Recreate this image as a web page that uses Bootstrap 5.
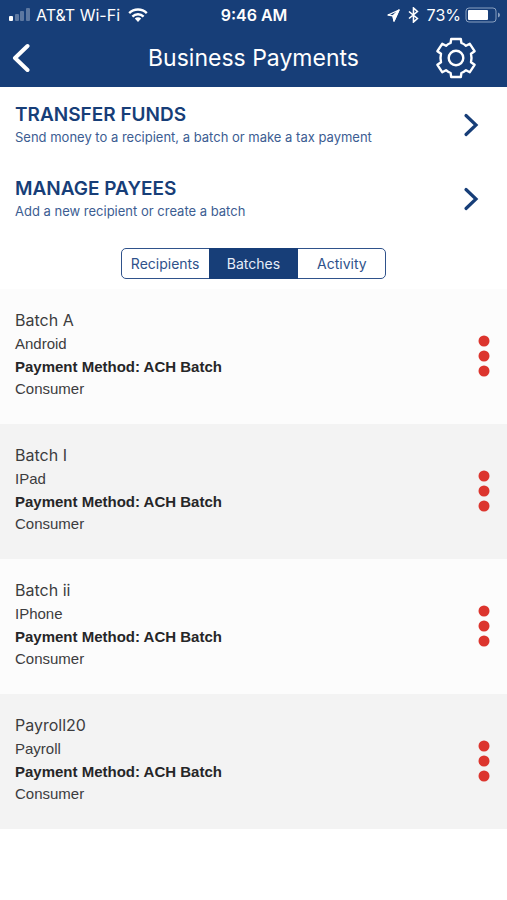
<!DOCTYPE html>
<html lang="en">
<head>
<meta charset="utf-8">
<meta name="viewport" content="width=device-width, initial-scale=1">
<title>Business Payments</title>
<link href="https://cdn.jsdelivr.net/npm/bootstrap@5.3.0/dist/css/bootstrap.min.css" rel="stylesheet">
<style>
:root { --navy: #173e78; }
body { font-family: Inter, "Liberation Sans", sans-serif; background: #fff; }
svg { display: block; flex: none; }
.app-header { background: var(--navy); color: #fff; }
.status-bar { height: 30px; padding: 0 7px 0 8px; font-size: 16px; line-height: 30px; }
.status-side { flex: 1 1 0; }
.status-time { font-weight: 600; }
.title-bar { height: 57px; padding: 0 12px 2px; }
.title-side { flex: 1 1 0; }
.settings { margin-right: 18px; }
.title-bar h1 { font-size: 23px; line-height: 30px; font-weight: 400; }
.action-link { height: 74px; padding: 2px 28px 0 15px; color: var(--navy); }
.action-name { font-size: 19px; line-height: 24px; font-weight: 600; }
.action-note { font-size: 13px; line-height: 20px; color: #3c5d92; }
.segments { width: 266px; height: 31px; margin: 13px auto 10px; }
.segments .btn { --bs-btn-color: #2f528b; --bs-btn-border-color: #2f528b; --bs-btn-active-bg: var(--navy);
  --bs-btn-active-border-color: var(--navy); --bs-btn-active-color: #e6edf8; --bs-btn-border-radius: 5px;
  flex: 1 1 0; padding: 0; font-size: 14px; line-height: 29px; }
.batch { padding: 20px 17px 24px 15px; color: #3c3c3e; background: #fcfcfc; }
.batch:nth-child(even) { background: #f3f3f3; }
.batch h2 { font-size: 16px; line-height: 23px; font-weight: 400; }
.batch p { font: 15px/23px "Liberation Sans", Arial, sans-serif; }
.batch p.method { font-weight: 700; color: #262628; }
.batch p:last-child { line-height: 22px; }
.batch .btn { padding: 3px 0 0; }
</style>
<script src="https://cdn.jsdelivr.net/npm/bootstrap@5.3.0/dist/js/bootstrap.bundle.min.js"></script>
</head>
<body>
<header class="app-header">
  <div class="status-bar d-flex align-items-center">
    <div class="status-side d-flex align-items-center">
      <svg width="24" height="16" viewBox="0 0 24 16" fill="#fff" aria-hidden="true"><rect x="1" y="9" width="4" height="5" rx="1"/><g opacity=".3"><rect x="7" y="7" width="4" height="7" rx="1"/><rect x="12" y="4" width="4" height="10" rx="1"/><rect x="18" y="1" width="4" height="13" rx="1"/></g></svg>
      <span class="ms-1">AT&amp;T Wi-Fi</span>
      <svg class="ms-2" width="20" height="16" viewBox="0 0 20 16" fill="none" stroke="#fff" stroke-width="2.4" aria-hidden="true"><path d="M1.2 6.2a12.4 12.4 0 0 1 17.6 0M4.4 9.6a7.900 7.900 0 0 1 11.2 0"/><path d="M6.8 11.6a4.500 4.500 0 0 1 6.4 0L10 15z" fill="#fff" stroke="none"/></svg>
    </div>
    <div class="status-time">9:46 AM</div>
    <div class="status-side d-flex align-items-center justify-content-end">
      <svg width="13" height="13" viewBox="0 0 13 13" fill="none" stroke="#fff" stroke-width="1.3" stroke-linejoin="round" aria-hidden="true"><path d="M12 1 1 6l5 .8L7 12z"/><path d="M12 1 6 6.800 7 12z" fill="#fff"/></svg>
      <svg class="ms-2" width="11" height="16" viewBox="0 0 11 16" fill="none" stroke="#fff" stroke-width="1.6" aria-hidden="true"><path d="m1 4.500 8.400 7L5.500 15V1l3.900 3.500-8.400 7"/></svg>
      <span class="ms-2">73%</span>
      <svg class="ms-1" width="35" height="16" viewBox="0 0 35 16" fill="none" aria-hidden="true"><rect x="1" y="1" width="30" height="14" rx="3" stroke="#8aa0c0"/><rect x="3" y="3" width="20" height="10" rx="1" fill="#fff"/><path d="M33 5.500q2 .6 2 2.500t-2 2.500z" fill="#8aa0c0"/></svg>
    </div>
  </div>
  <div class="title-bar d-flex align-items-center">
    <div class="title-side">
      <button class="btn p-0 border-0" type="button" aria-label="Back"><svg width="18" height="30" viewBox="0 0 18 30" fill="none" stroke="#fff" stroke-width="4" stroke-linecap="round" stroke-linejoin="round"><path d="M15.500 3 3 15l12.500 12"/></svg></button>
    </div>
    <h1 class="mb-0">Business Payments</h1>
    <div class="title-side d-flex justify-content-end">
      <button class="settings btn p-0 border-0" type="button" aria-label="Settings"><svg width="42" height="42" viewBox="-21 -21 42 42" fill="none" stroke="#fff" stroke-width="2.400" stroke-linejoin="round"><circle r="7.300"/><path d="M-4.800-19H4.800L5.400-15Q8-14 10-12.200L13.800-14.200 18.600-6.800 15-4.200Q16 0 15 4.200L18.600 6.800 13.800 14.200 10 12.200Q8 14 5.400 15L4.800 19H-4.800L-5.400 15Q-8 14-10 12.200L-13.800 14.200-18.600 6.800-15 4.200Q-16 0-15-4.200L-18.600-6.800-13.800-14.200-10-12.200Q-8-14-5.400-15Z"/></svg></button>
    </div>
  </div>
</header>
<main>
  <nav aria-label="Payment actions">
    <a href="#transfer" class="action-link d-flex align-items-center justify-content-between text-decoration-none">
      <span><span class="action-name d-block">TRANSFER FUNDS</span><span class="action-note d-block">Send money to a recipient, a batch or make a tax payment</span></span>
      <svg width="16" height="24" viewBox="0 0 16 24" fill="none" stroke="#173e78" stroke-width="3.200" stroke-linecap="round"><path d="m3 2.500 10 9.500-10 9.500"/></svg>
    </a>
    <a href="#payees" class="action-link d-flex align-items-center justify-content-between text-decoration-none">
      <span><span class="action-name d-block">MANAGE PAYEES</span><span class="action-note d-block">Add a new recipient or create a batch</span></span>
      <svg width="16" height="24" viewBox="0 0 16 24" fill="none" stroke="#173e78" stroke-width="3.200" stroke-linecap="round"><path d="m3 2.500 10 9.500-10 9.500"/></svg>
    </a>
  </nav>
  <div class="segments btn-group d-flex" role="group" aria-label="Payment lists">
    <button type="button" class="btn">Recipients</button>
    <button type="button" class="btn active" aria-pressed="true">Batches</button>
    <button type="button" class="btn">Activity</button>
  </div>
  <ul class="list-unstyled mb-0">
    <li class="batch d-flex align-items-center justify-content-between">
      <div><h2 class="mb-0">Batch A</h2><p class="mb-0">Android</p><p class="method mb-0">Payment Method: ACH Batch</p><p class="mb-0">Consumer</p></div>
      <button class="btn border-0" type="button" aria-label="Options for Batch A"><svg width="12" height="42" viewBox="0 0 12 42" fill="#dc352e"><circle cx="6" cy="6" r="5.500"/><circle cx="6" cy="21" r="5.500"/><circle cx="6" cy="36" r="5.500"/></svg></button>
    </li>
    <li class="batch d-flex align-items-center justify-content-between">
      <div><h2 class="mb-0">Batch I</h2><p class="mb-0">IPad</p><p class="method mb-0">Payment Method: ACH Batch</p><p class="mb-0">Consumer</p></div>
      <button class="btn border-0" type="button" aria-label="Options for Batch I"><svg width="12" height="42" viewBox="0 0 12 42" fill="#dc352e"><circle cx="6" cy="6" r="5.500"/><circle cx="6" cy="21" r="5.500"/><circle cx="6" cy="36" r="5.500"/></svg></button>
    </li>
    <li class="batch d-flex align-items-center justify-content-between">
      <div><h2 class="mb-0">Batch ii</h2><p class="mb-0">IPhone</p><p class="method mb-0">Payment Method: ACH Batch</p><p class="mb-0">Consumer</p></div>
      <button class="btn border-0" type="button" aria-label="Options for Batch ii"><svg width="12" height="42" viewBox="0 0 12 42" fill="#dc352e"><circle cx="6" cy="6" r="5.500"/><circle cx="6" cy="21" r="5.500"/><circle cx="6" cy="36" r="5.500"/></svg></button>
    </li>
    <li class="batch d-flex align-items-center justify-content-between">
      <div><h2 class="mb-0">Payroll20</h2><p class="mb-0">Payroll</p><p class="method mb-0">Payment Method: ACH Batch</p><p class="mb-0">Consumer</p></div>
      <button class="btn border-0" type="button" aria-label="Options for Payroll20"><svg width="12" height="42" viewBox="0 0 12 42" fill="#dc352e"><circle cx="6" cy="6" r="5.500"/><circle cx="6" cy="21" r="5.500"/><circle cx="6" cy="36" r="5.500"/></svg></button>
    </li>
  </ul>
</main>
</body>
</html>
